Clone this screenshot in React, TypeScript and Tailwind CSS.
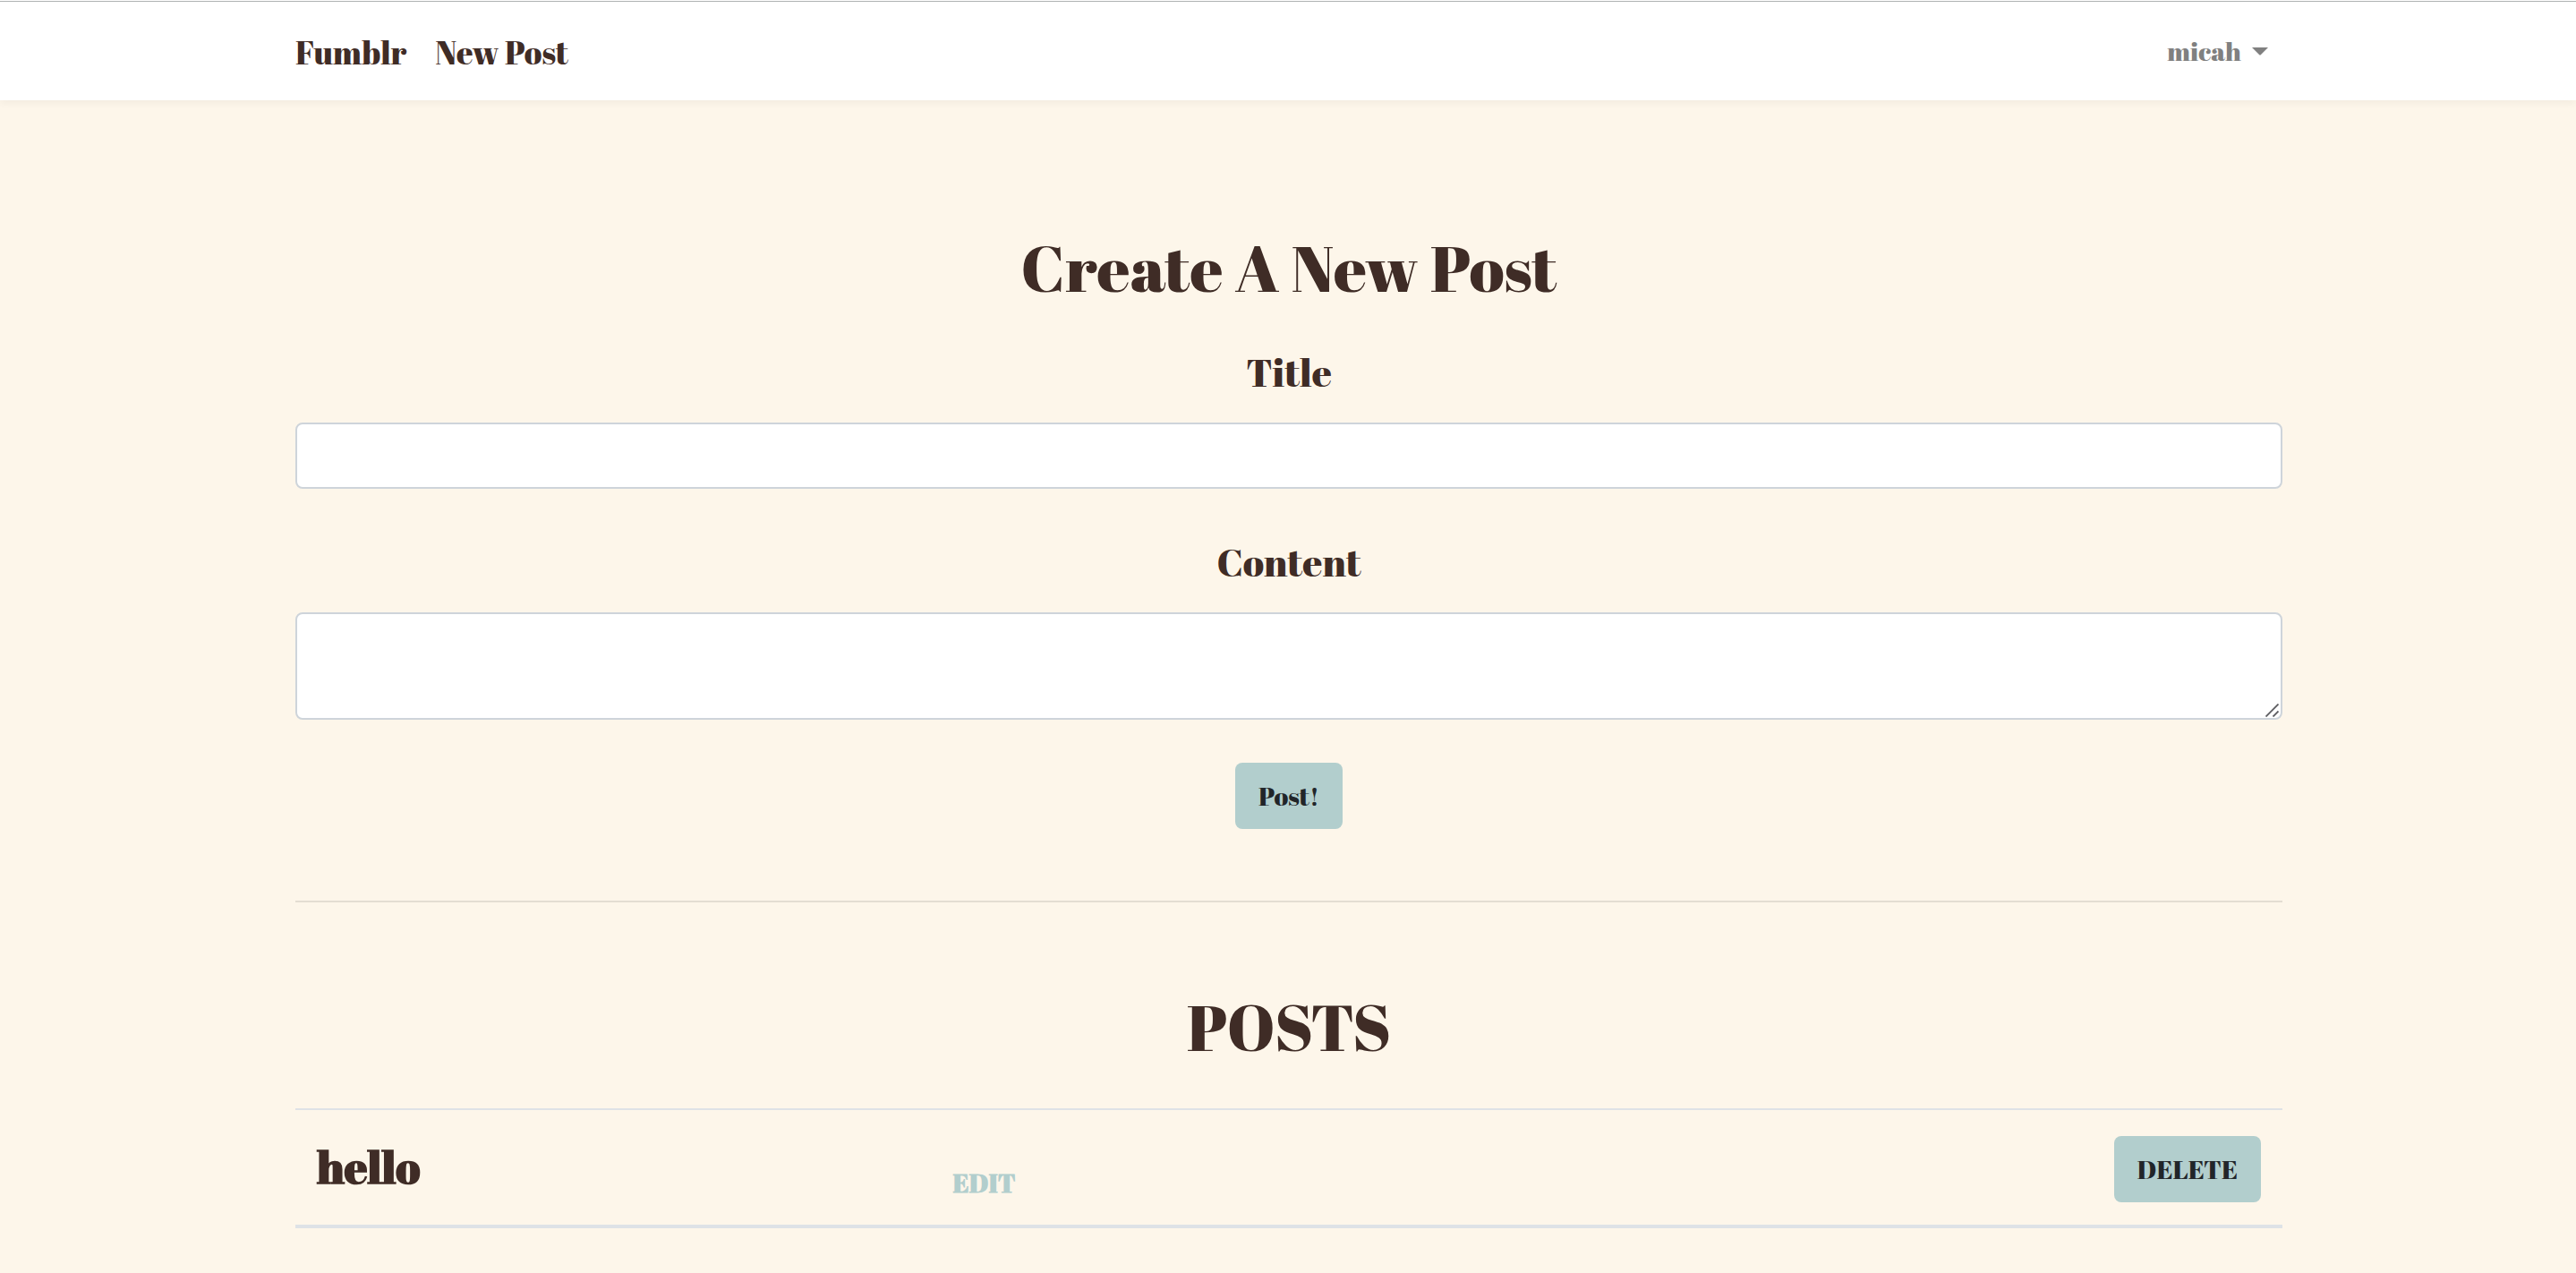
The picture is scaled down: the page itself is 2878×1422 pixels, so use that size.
const posts = [{ id: 1, title: "hello" }];

function Navbar() {
  return (
    <header className="relative bg-white pt-px shadow-[0_4px_8px_rgba(0,0,0,0.04)]">
      <div className="border-t border-[#b0b3b3]">
        <nav className="mx-auto flex h-[110px] w-full max-w-[2282px] items-center justify-between pt-0.5 pr-[30px] pl-8">
          <div className="flex items-center gap-8 text-[36px] leading-[56px] whitespace-nowrap">
            <a href="#home">Fumblr</a>
            <a href="#new">New Post</a>
          </div>
          <button
            type="button"
            aria-haspopup="menu"
            className="flex items-center gap-3 pr-4 pb-0.5 text-[29px] leading-[46px] text-[#808080]"
          >
            micah
            <svg width="18" height="9" viewBox="0 0 18 9" fill="currentColor" aria-hidden="true">
              <path d="M0 0H18L10 8Q9 9 8 8Z" />
            </svg>
          </button>
        </nav>
      </div>
    </header>
  );
}

function PostForm() {
  return (
    <form className="flex flex-col items-center" onSubmit={(e) => e.preventDefault()}>
      <label htmlFor="title" className="text-[43px] leading-[56px]">
        Title
      </label>
      <input
        id="title"
        type="text"
        className="mt-7 h-[74px] w-full rounded-lg border-2 border-[#ced4da] bg-white px-6 text-[29px] outline-none"
      />
      <label htmlFor="content" className="mt-[54px] text-[43px] leading-[56px]">
        Content
      </label>
      <div className="relative mt-7 w-full">
        <textarea
          id="content"
          className="block h-[120px] w-full resize-none rounded-lg border-2 border-[#ced4da] bg-white px-6 py-3 text-[29px] outline-none"
        />
        <svg
          className="pointer-events-none absolute right-1 bottom-[3px]"
          width="15"
          height="15"
          viewBox="0 0 15 15"
          stroke="#5c5c60"
          strokeWidth="1.8"
          aria-hidden="true"
        >
          <path d="M0.5 14.5L14.5 0.5M8.5 14.5L14.5 8.5" />
        </svg>
      </div>
      <button
        type="submit"
        className="mt-12 h-[74px] rounded-lg bg-[#b2cecd] px-[26px] text-[29px] leading-[46px] text-[#212529]"
      >
        Post!
      </button>
    </form>
  );
}

function PostTable() {
  return (
    <table className="mt-[45px] w-full table-fixed border-collapse border-t-2 border-b-4 border-[#dee2e6]">
      <tbody>
        {posts.map((post) => (
          <tr key={post.id} className="h-[131px]">
            <th scope="row" className="w-[32%] px-6 pb-0.5 text-left text-[50px] leading-[60px] font-bold">
              {post.title}
            </th>
            <td className="px-6 pb-6 align-bottom">
              <a href="#edit" className="block text-[29px] leading-[46px] font-bold text-[#b2cecd]">
                EDIT
              </a>
            </td>
            <td className="px-6 pt-1 text-right">
              <button
                type="button"
                className="h-[74px] rounded-lg bg-[#b2cecd] px-[26px] text-[29px] leading-[46px] text-[#212529]"
              >
                DELETE
              </button>
            </td>
          </tr>
        ))}
      </tbody>
    </table>
  );
}

export default function App() {
  return (
    <div className="min-h-screen bg-[#fdf6ea] font-['Abril_Fatface','Liberation_Serif',serif] font-normal text-[#3f2c26]">
      <Navbar />
      <main className="mx-auto w-full max-w-[2282px] pt-36 pr-[30px] pb-12 pl-8">
        <h1 className="mb-[46px] text-center text-[72px] leading-[86px]">Create A New Post</h1>
        <PostForm />
        <hr className="mt-20 border-t-2 border-black/10" />
        <h1 className="mt-24 mb-[48px] text-center text-[72px] leading-[86px]">POSTS</h1>
        <PostTable />
      </main>
    </div>
  );
}
